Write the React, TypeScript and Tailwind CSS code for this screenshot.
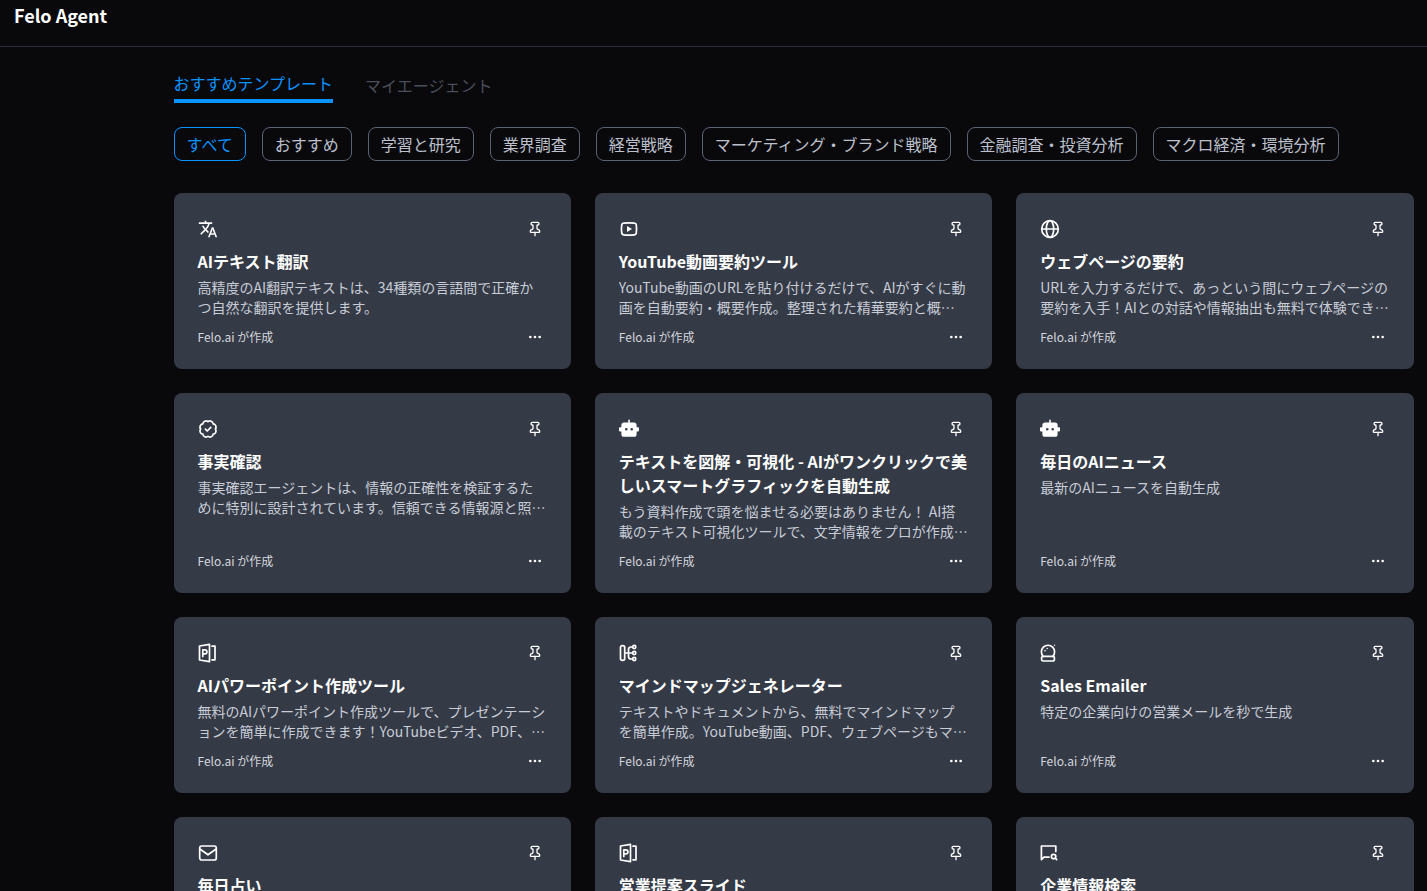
import { useState, type ReactNode } from "react";
import { Ellipsis, Pin } from "lucide-react";
import { MdTranslate } from "react-icons/md";

type IconName = "translate" | "video" | "globe" | "verified" | "bot" | "slides" | "mindmap" | "crystal" | "mail" | "chatSearch";

interface Template {
  id: number;
  icon: IconName;
  title: string;
  description?: string;
}

const TABS = ["おすすめテンプレート", "マイエージェント"];

const CATEGORIES = [
  "すべて",
  "おすすめ",
  "学習と研究",
  "業界調査",
  "経営戦略",
  "マーケティング・ブランド戦略",
  "金融調査・投資分析",
  "マクロ経済・環境分析",
];

const TEMPLATES: Template[] = [
  {
    id: 1,
    icon: "translate",
    title: "AIテキスト翻訳",
    description: "高精度のAI翻訳テキストは、34種類の言語間で正確かつ自然な翻訳を提供します。",
  },
  {
    id: 2,
    icon: "video",
    title: "YouTube動画要約ツール",
    description: "YouTube動画のURLを貼り付けるだけで、AIがすぐに動画を自動要約・概要作成。整理された精華要約と概…",
  },
  {
    id: 3,
    icon: "globe",
    title: "ウェブページの要約",
    description: "URLを入力するだけで、あっという間にウェブページの要約を入手！AIとの対話や情報抽出も無料で体験でき…",
  },
  {
    id: 4,
    icon: "verified",
    title: "事実確認",
    description: "事実確認エージェントは、情報の正確性を検証するために特別に設計されています。信頼できる情報源と照…",
  },
  {
    id: 5,
    icon: "bot",
    title: "テキストを図解・可視化 - AIがワンクリックで美しいスマートグラフィックを自動生成",
    description: "もう資料作成で頭を悩ませる必要はありません！ AI搭載のテキスト可視化ツールで、文字情報をプロが作成…",
  },
  { id: 6, icon: "bot", title: "毎日のAIニュース", description: "最新のAIニュースを自動生成" },
  {
    id: 7,
    icon: "slides",
    title: "AIパワーポイント作成ツール",
    description: "無料のAIパワーポイント作成ツールで、プレゼンテーションを簡単に作成できます！YouTubeビデオ、PDF、…",
  },
  {
    id: 8,
    icon: "mindmap",
    title: "マインドマップジェネレーター",
    description: "テキストやドキュメントから、無料でマインドマップを簡単作成。YouTube動画、PDF、ウェブページもマ…",
  },
  { id: 9, icon: "crystal", title: "Sales Emailer", description: "特定の企業向けの営業メールを秒で生成" },
  { id: 10, icon: "mail", title: "毎日占い" },
  { id: 11, icon: "slides", title: "営業提案スライド" },
  { id: 12, icon: "chatSearch", title: "企業情報検索" },
];

function Glyph({ children }: { children: ReactNode }) {
  return (
    <svg
      className="size-5"
      viewBox="0 0 20 20"
      fill="none"
      stroke="currentColor"
      strokeWidth="1.7"
      strokeLinecap="round"
      strokeLinejoin="round"
      aria-hidden="true"
    >
      {children}
    </svg>
  );
}

function TemplateIcon({ name }: { name: IconName }) {
  switch (name) {
    case "translate":
      return <MdTranslate className="size-5" />;
    case "video":
      return (
        <Glyph>
          <path d="M4.6 4.2Q10 3.4 15.4 4.2Q17 4.4 17.3 6Q17.8 10 17.3 14Q17 15.6 15.4 15.8Q10 16.6 4.6 15.8Q3 15.6 2.7 14Q2.2 10 2.7 6Q3 4.4 4.6 4.2Z" />
          <path d="M8 7v6l5-3z" fill="currentColor" stroke="none" />
        </Glyph>
      );
    case "globe":
      return (
        <Glyph>
          <circle cx="10" cy="10" r="8.3" />
          <ellipse cx="10" cy="10" rx="3.7" ry="8.3" />
          <path d="M1.7 10h16.6" />
        </Glyph>
      );
    case "verified":
      return (
        <Glyph>
          <path d="M10 2.6A3.3 3.3 0 0 1 15.2 4.8A3.3 3.3 0 0 1 17.4 10A3.3 3.3 0 0 1 15.2 15.2A3.3 3.3 0 0 1 10 17.4A3.3 3.3 0 0 1 4.8 15.2A3.3 3.3 0 0 1 2.6 10A3.3 3.3 0 0 1 4.8 4.8A3.3 3.3 0 0 1 10 2.6Z" />
          <path d="M7.4 10.2l1.8 1.8 3.6-3.7" />
        </Glyph>
      );
    case "bot":
      return (
        <svg className="size-5" viewBox="0 0 20 20" fill="currentColor" aria-hidden="true">
          <path
            fillRule="evenodd"
            d="M9.2 1.2a.8.8 0 0 1 1.6 0V3.5H15a2.6 2.6 0 0 1 2.6 2.6v2.1H19a1 1 0 0 1 1 1v2.4a1 1 0 0 1-1 1h-1.4v2.6A2.6 2.6 0 0 1 15 17.8H5a2.6 2.6 0 0 1-2.6-2.6v-2.6H1a1 1 0 0 1-1-1V9.200a1 1 0 0 1 1-1h1.4V6.1A2.6 2.6 0 0 1 5 3.500h4.2zM7.300 9a1.300 1.300 0 1 0 0 2.600 1.300 1.300 0 0 0 0-2.600zM12.700 9a1.300 1.300 0 1 0 0 2.600 1.300 1.300 0 0 0 0-2.600z"
          />
        </svg>
      );
    case "slides":
      return (
        <Glyph>
          <path d="M1.500 3L11.500 1.300V18.700L1.500 17z" />
          <path d="M14 3.200h3V16.800h-3" />
          <path d="M4.800 13.400V6.800H6.900a2 2 0 0 1 0 4.100H4.800" />
        </Glyph>
      );
    case "mindmap":
      return (
        <Glyph>
          <rect x="1.500" y="2.600" width="4.200" height="14.800" rx="1.800" />
          <path d="M5.700 10h7.600M13.500 4H12a2.500 2.500 0 0 0-2.500 2.500v7A2.500 2.500 0 0 0 12 16h1.500" />
          <circle cx="15.200" cy="4" r="1.600" />
          <circle cx="15.200" cy="10" r="1.600" />
          <circle cx="15.200" cy="16" r="1.600" />
        </Glyph>
      );
    case "crystal":
      return (
        <Glyph>
          <path d="M3.200 13.400A6.600 6.600 0 1 1 12.800 13.400" />
          <path d="M3 13.400h10a1.400 1.400 0 0 1 1.400 1.400v1.600a1.600 1.600 0 0 1-1.600 1.600H3.200a1.600 1.600 0 0 1-1.600-1.600v-1.600A1.400 1.400 0 0 1 3 13.400z" />
          <path d="M5 7.600v.1M7.200 5.400v.1" strokeWidth="1.500" />
          <path d="M14.600 2.200v.1" strokeWidth="1.200" />
        </Glyph>
      );
    case "mail":
      return (
        <Glyph>
          <rect x="1.700" y="3" width="16.600" height="14" rx="2" />
          <path d="M2.200 6.200l7.800 5.600 7.800-5.600" />
        </Glyph>
      );
    case "chatSearch":
      return (
        <Glyph>
          <path d="M15.800 8.400V3H1.400v13.600L4 14.200h5" />
          <circle cx="13.600" cy="13.600" r="2.200" />
          <path d="M15.200 15.200l1.500 1.500" />
        </Glyph>
      );
  }
}

function TemplateCard({ template }: { template: Template }) {
  return (
    <article className="flex flex-col rounded-lg bg-[#343a46] p-6">
      <div className="flex h-6 items-center justify-between">
        <TemplateIcon name={template.icon} />
        <button type="button" aria-label="ピン留め" className="flex size-6 items-center justify-center">
          <Pin className="size-4" />
        </button>
      </div>
      <h2 className="mt-2 text-base font-bold">{template.title}</h2>
      <p className="mt-1 line-clamp-2 min-h-10 text-sm text-[#c8ccd6]">{template.description}</p>
      <div className="mt-auto flex items-center justify-between pt-3">
        <span className="text-xs text-[#d4d7de]">Felo.ai が作成</span>
        <button type="button" aria-label="メニュー" className="flex h-4 w-6 items-center justify-center">
          <Ellipsis className="size-4" />
        </button>
      </div>
    </article>
  );
}

export default function App() {
  const [tab, setTab] = useState(TABS[0]);
  const [category, setCategory] = useState(CATEGORIES[0]);

  return (
    <div lang="ja" className="min-h-screen bg-[#09090b] font-['Noto_Sans_CJK_JP',sans-serif] text-white">
      <header className="h-[47px] border-b border-[#2b2f38] px-[14px] pt-px">
        <h1 className="text-lg font-bold">Felo Agent</h1>
      </header>

      <main className="pt-5 pb-6 pl-40">
        <div className="mx-auto max-w-[1240px]">
          <nav className="flex gap-8">
            {TABS.map((t) => (
              <button
                key={t}
                type="button"
                onClick={() => setTab(t)}
                className={`h-9 text-base ${t === tab ? "border-b-4 border-[#0b93ff] text-[#0b93ff]" : "text-[#4a4f5b]"}`}
              >
                {t}
              </button>
            ))}
          </nav>

          <div className="mt-6 flex flex-wrap gap-4">
            {CATEGORIES.map((c) => (
              <button
                key={c}
                type="button"
                onClick={() => setCategory(c)}
                className={`rounded-lg border px-3 py-1 text-base ${
                  c === category ? "border-[#0b93ff] text-[#0b93ff]" : "border-[#5a6273] text-[#bcc0cc]"
                }`}
              >
                {c}
              </button>
            ))}
          </div>

          <div className="mt-8 grid grid-cols-3 gap-6">
            {TEMPLATES.map((t) => (
              <TemplateCard key={t.id} template={t} />
            ))}
          </div>
        </div>
      </main>
    </div>
  );
}
